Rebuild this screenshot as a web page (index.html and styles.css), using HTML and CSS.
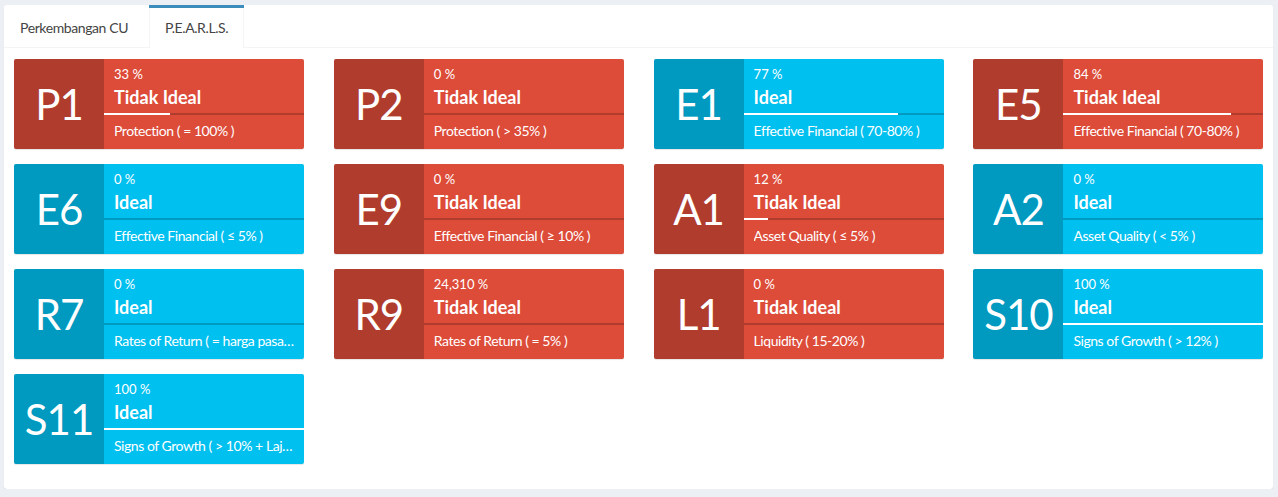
FILE: index.html
```html
<!DOCTYPE html>
<html>
<head>
<meta charset="utf-8">
<link rel="stylesheet" href="styles.css">
</head>
<body>
<div class="panel">
  <ul class="tabs">
    <li class="tab"><a>Perkembangan CU</a></li>
    <li class="tab active"><a>P.E.A.R.L.S.</a></li>
  </ul>
  <div class="grid">
    <div class="box red"><div class="icon">P1</div><div class="content"><div class="pct">33 %</div><div class="status">Tidak Ideal</div><div class="progress"><div class="bar" style="width:33%"></div></div><div class="desc">Protection ( = 100% )</div></div></div>
    <div class="box red"><div class="icon">P2</div><div class="content"><div class="pct">0 %</div><div class="status">Tidak Ideal</div><div class="progress"><div class="bar" style="width:0%"></div></div><div class="desc">Protection ( &gt; 35% )</div></div></div>
    <div class="box aqua"><div class="icon">E1</div><div class="content"><div class="pct">77 %</div><div class="status">Ideal</div><div class="progress"><div class="bar" style="width:77%"></div></div><div class="desc">Effective Financial ( 70-80% )</div></div></div>
    <div class="box red"><div class="icon">E5</div><div class="content"><div class="pct">84 %</div><div class="status">Tidak Ideal</div><div class="progress"><div class="bar" style="width:84%"></div></div><div class="desc">Effective Financial ( 70-80% )</div></div></div>

    <div class="box aqua"><div class="icon">E6</div><div class="content"><div class="pct">0 %</div><div class="status">Ideal</div><div class="progress"><div class="bar" style="width:0%"></div></div><div class="desc">Effective Financial ( ≤ 5% )</div></div></div>
    <div class="box red"><div class="icon">E9</div><div class="content"><div class="pct">0 %</div><div class="status">Tidak Ideal</div><div class="progress"><div class="bar" style="width:0%"></div></div><div class="desc">Effective Financial ( ≥ 10% )</div></div></div>
    <div class="box red"><div class="icon">A1</div><div class="content"><div class="pct">12 %</div><div class="status">Tidak Ideal</div><div class="progress"><div class="bar" style="width:12%"></div></div><div class="desc">Asset Quality ( ≤ 5% )</div></div></div>
    <div class="box aqua"><div class="icon">A2</div><div class="content"><div class="pct">0 %</div><div class="status">Ideal</div><div class="progress"><div class="bar" style="width:0%"></div></div><div class="desc">Asset Quality ( &lt; 5% )</div></div></div>

    <div class="box aqua"><div class="icon">R7</div><div class="content"><div class="pct">0 %</div><div class="status">Ideal</div><div class="progress"><div class="bar" style="width:0%"></div></div><div class="desc">Rates of Return ( = harga pasar )</div></div></div>
    <div class="box red"><div class="icon">R9</div><div class="content"><div class="pct">24,310 %</div><div class="status">Tidak Ideal</div><div class="progress"><div class="bar" style="width:0%"></div></div><div class="desc">Rates of Return ( = 5% )</div></div></div>
    <div class="box red"><div class="icon">L1</div><div class="content"><div class="pct">0 %</div><div class="status">Tidak Ideal</div><div class="progress"><div class="bar" style="width:0%"></div></div><div class="desc">Liquidity ( 15-20% )</div></div></div>
    <div class="box aqua"><div class="icon">S10</div><div class="content"><div class="pct">100 %</div><div class="status">Ideal</div><div class="progress"><div class="bar" style="width:100%"></div></div><div class="desc">Signs of Growth ( &gt; 12% )</div></div></div>

    <div class="box aqua"><div class="icon">S11</div><div class="content"><div class="pct">100 %</div><div class="status">Ideal</div><div class="progress"><div class="bar" style="width:100%"></div></div><div class="desc">Signs of Growth ( &gt; 10% + Laju Inflasi )</div></div></div>
  </div>
</div>
</body>
</html>
```

FILE: styles.css
```css
* { box-sizing: border-box; }
html, body { margin: 0; padding: 0; }
body {
  background: #ecf0f5;
  font-family: Lato, "Liberation Sans", sans-serif;
  font-size: 14px;
  color: #333;
  padding: 5px 5px 0 4px;
}
.panel {
  background: #fff;
  border-radius: 3px;
  box-shadow: 0 1px 1px rgba(0,0,0,0.1);
  height: 484px;
}
.tabs {
  list-style: none;
  margin: 0;
  padding: 0;
  display: flex;
  border-bottom: 1px solid #f4f4f4;
  border-top-left-radius: 3px;
  border-top-right-radius: 3px;
}
.tab {
  border-top: 3px solid transparent;
  margin-bottom: -1px;
  margin-right: 5px;
}
.tab a {
  display: block;
  padding: 10px 15px 10px 16px;
  line-height: 20px;
  color: #444;
  letter-spacing: -0.4px;
  border-left: 1px solid transparent;
  border-right: 1px solid transparent;
}
.tab:first-child a { border-left: 0; }
.tab.active { border-top-color: #3c8dbc; }
.tab.active a {
  background: #fff;
  padding-left: 15px;
  border-left-color: #f4f4f4;
  border-right-color: #f4f4f4;
}
.grid {
  display: grid;
  grid-template-columns: repeat(4, 290px);
  column-gap: 29.8px;
  row-gap: 15px;
  padding: 11px 10px 10px;
}
.box {
  display: flex;
  height: 90px;
  border-radius: 2px;
  box-shadow: 0 1px 1px rgba(0,0,0,0.1);
  color: #fff;
  overflow: hidden;
}
.red { background: #dd4b39; }
.aqua { background: #00c0ef; }
.icon {
  width: 90px;
  flex: none;
  background: rgba(0,0,0,0.2);
  font-size: 42px;
  font-weight: 400;
  line-height: 90px;
  text-align: center;
  letter-spacing: -1px;
}
.content {
  flex: 1;
  min-width: 0;
  padding: 5px 10px;
}
.pct {
  font-size: 13px;
  line-height: 20px;
}
.status {
  font-size: 18px;
  font-weight: bold;
  line-height: 24px;
  padding-top: 1px;
  height: 24px;
}
.progress {
  height: 2px;
  margin: 5px -10px;
  background: rgba(0,0,0,0.2);
}
.bar {
  height: 2px;
  background: #fff;
}
.desc {
  font-size: 14px;
  line-height: 21px;
  letter-spacing: -0.45px;
  white-space: nowrap;
  overflow: hidden;
  text-overflow: ellipsis;
}
```
